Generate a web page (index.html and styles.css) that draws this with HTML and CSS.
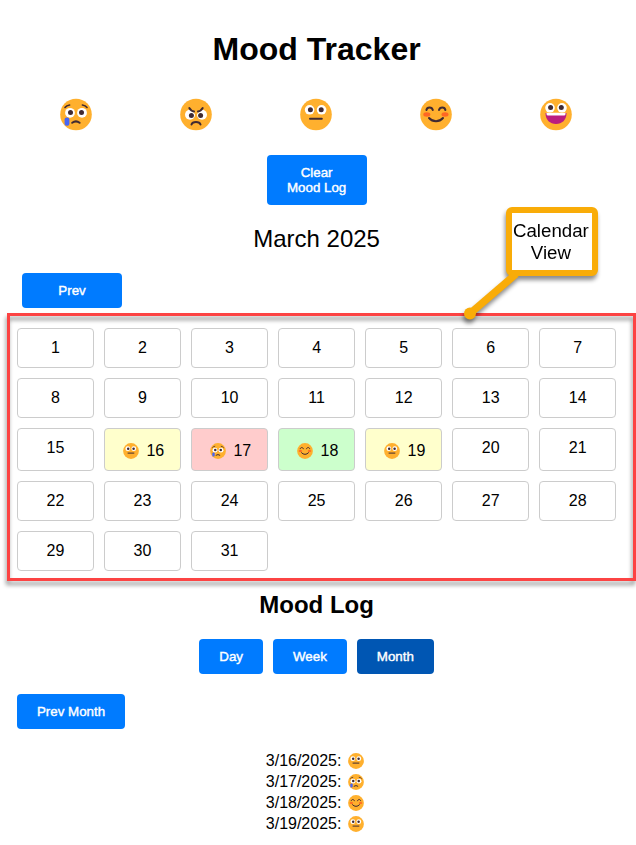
FILE: index.html
```html
<!DOCTYPE html>
<html lang="en">
<head>
<meta charset="utf-8">
<title>Mood Tracker</title>
<link rel="stylesheet" href="styles.css">
</head>
<body>
<svg class="sprite" aria-hidden="true">
  <defs>
    <g id="base"><circle cx="16" cy="16" r="15.8" fill="#ffb02e"/></g>
    <g id="eyes">
      <circle cx="9.6" cy="11.3" r="4.8" fill="#fff"/><circle cx="21.6" cy="11.3" r="4.8" fill="#fff"/>
      <circle cx="10.4" cy="11.3" r="2.5" fill="#402a32"/><circle cx="21.2" cy="11.3" r="2.5" fill="#402a32"/>
    </g>
    <symbol id="neutral" viewBox="0 0 32 32"><use href="#base"/><use href="#eyes"/><path class="ink" d="M10 20.2H21.8"/></symbol>
    <symbol id="sad" viewBox="0 0 32 32"><use href="#base"/>
      <circle cx="10" cy="14.3" r="4.9" fill="#fff"/><circle cx="22" cy="14.3" r="4.9" fill="#fff"/>
      <circle cx="10.5" cy="14" r="2.5" fill="#402a32"/><circle cx="21.5" cy="14" r="2.5" fill="#402a32"/>
      <path class="ink thin" d="M5 9Q6.5 6.8 9.6 6.5M22.4 6.5Q25.5 6.8 27 9"/>
      <path class="ink" d="M12.2 24.3Q16 21.5 19.6 24.3"/>
      <rect x="4.6" y="19" width="4.8" height="8.2" rx="2" fill="#4765f5"/></symbol>
    <symbol id="angry" viewBox="0 0 32 32"><use href="#base"/>
      <circle cx="10" cy="16.3" r="5" fill="#fff"/><circle cx="22" cy="16.3" r="5" fill="#fff"/>
      <path d="M8 8L15 12.8V15.4M24 8L17 12.8V15.4" fill="#ffb02e"/>
      <circle cx="11.4" cy="17" r="2.5" fill="#402a32"/><circle cx="20.6" cy="17" r="2.5" fill="#402a32"/>
      <path class="ink" d="M9.3 9.6Q11 12.7 14 13M22.7 9.6Q21 12.7 18 13"/>
      <path class="ink" d="M11.5 26Q12.3 23.6 16 23.6T20.5 26"/></symbol>
    <symbol id="happy" viewBox="0 0 32 32"><use href="#base"/>
      <ellipse cx="6.8" cy="16" rx="3.5" ry="2.2" fill="#ff6723"/><ellipse cx="25" cy="16" rx="3.5" ry="2.2" fill="#ff6723"/>
      <path class="ink" d="M6.4 11.5C7 8 12 8 12.8 11.5M19 11.5C19.8 8 24.8 8 25.4 11.5"/>
      <path class="ink" d="M9 19.5Q11.7 22.7 16 22.7T23 19.5"/></symbol>
    <symbol id="grin" viewBox="0 0 32 32"><use href="#base"/>
      <circle cx="10" cy="9.3" r="4.8" fill="#fff"/><circle cx="22" cy="9.3" r="4.8" fill="#fff"/>
      <circle cx="10.6" cy="9" r="2.5" fill="#402a32"/><circle cx="21.3" cy="9" r="2.5" fill="#402a32"/>
      <path d="M5.5 14.5H26.5C26.5 21.5 22 25.5 16 25.5S5.5 21.5 5.5 14.5Z" fill="#bb1d80"/>
      <path d="M6.5 14.2H25.5V15.5Q25.5 17 24 17H8Q6.5 17 6.5 15.5Z" fill="#fff"/></symbol>
  </defs>
</svg>
<main class="app">
  <h1>Mood Tracker</h1>
  <div class="moods">
    <svg><use href="#sad"/></svg>
    <svg><use href="#angry"/></svg>
    <svg><use href="#neutral"/></svg>
    <svg><use href="#happy"/></svg>
    <svg><use href="#grin"/></svg>
  </div>
  <button class="btn clear">Clear<br>Mood Log</button>
  <div class="month">March 2025</div>
  <button class="btn prev">Prev</button>
  <section class="calendar">
    <div class="day">1</div><div class="day">2</div><div class="day">3</div><div class="day">4</div><div class="day">5</div><div class="day">6</div><div class="day">7</div>
    <div class="day">8</div><div class="day">9</div><div class="day">10</div><div class="day">11</div><div class="day">12</div><div class="day">13</div><div class="day">14</div>
    <div class="day">15</div>
    <div class="day mood yellow"><svg class="face"><use href="#neutral"/></svg>16</div>
    <div class="day mood red"><svg class="face"><use href="#sad"/></svg>17</div>
    <div class="day mood green"><svg class="face"><use href="#happy"/></svg>18</div>
    <div class="day mood yellow"><svg class="face"><use href="#neutral"/></svg>19</div>
    <div class="day">20</div><div class="day">21</div>
    <div class="day">22</div><div class="day">23</div><div class="day">24</div><div class="day">25</div><div class="day">26</div><div class="day">27</div><div class="day">28</div>
    <div class="day">29</div><div class="day">30</div><div class="day">31</div>
    <div class="frame"></div>
    <div class="callout">
      <svg class="tail" viewBox="0 0 60 50"><path d="M55 4L9 43.5" stroke="#f9ac08" stroke-width="7.5"/><circle cx="9" cy="43.5" r="6" fill="#f9ac08"/></svg>
      <div class="label">Calendar<br>View</div>
    </div>
  </section>
  <h2>Mood Log</h2>
  <div class="tabs">
    <button class="btn">Day</button>
    <button class="btn">Week</button>
    <button class="btn active">Month</button>
  </div>
  <button class="btn prev-month">Prev Month</button>
  <div class="log">
    <div class="entry">3/16/2025:<svg class="face"><use href="#neutral"/></svg></div>
    <div class="entry">3/17/2025:<svg class="face"><use href="#sad"/></svg></div>
    <div class="entry">3/18/2025:<svg class="face"><use href="#happy"/></svg></div>
    <div class="entry">3/19/2025:<svg class="face"><use href="#neutral"/></svg></div>
  </div>
</main>
</body>
</html>
```
FILE: styles.css
```css
* { box-sizing: border-box; }
body {
  margin: 0;
  background: #fff;
  color: #000;
  font: 16px/18px "Liberation Sans", Arial, sans-serif;
  overflow: hidden;
}
.sprite { position: absolute; width: 0; height: 0; }
.ink { fill: none; stroke: #402a32; stroke-width: 2; stroke-linecap: round; }
.thin { stroke-width: 1.6; }
.app {
  display: flex;
  flex-direction: column;
  align-items: center;
  width: 599.2px;
  margin-left: 17px;
  padding-top: 31px;
}
h1 { margin: 0; font-size: 32px; line-height: 36px; }
.moods {
  display: flex;
  justify-content: space-around;
  width: 600px;
  margin: 31px 1px 0 0;
}
.moods svg { width: 32px; height: 33px; }
.btn {
  border: 0;
  border-radius: 4px;
  padding: 10px 20px;
  background: #007bff;
  color: #fff;
  font: 13.333px/15px "Liberation Sans", Arial, sans-serif;
  -webkit-text-stroke: 0.4px #fff;
}
.clear { width: 100px; margin-top: 24px; padding: 10px; }
.month { margin-top: 20px; font-size: 24px; line-height: 28px; }
.prev { align-self: flex-start; width: 100px; margin: 20px 0 0 5px; }
.calendar {
  position: relative;
  display: grid;
  grid-template-columns: repeat(7, 1fr);
  gap: 10px;
  width: 599.4px;
  margin-top: 20px;
}
.day {
  border: 1px solid #ccc;
  border-radius: 4px;
  padding: 10px 0;
  text-align: center;
}
.mood {
  display: flex;
  justify-content: center;
  align-items: center;
  padding: 11px 0 9px;
  line-height: 21px;
}
.mood .face { margin: 0 7.6px 0 2px; }
.yellow { background: #ffc; }
.red { background: #fcc; }
.green { background: #cfc; }
.face { width: 16px; height: 16px; }
.frame {
  position: absolute;
  inset: -15px -19.6px -10px -10px;
  border: 3px solid #fc4343;
  filter: drop-shadow(-1px 4px 2px rgba(0, 0, 0, 0.42));
}
.callout {
  position: absolute;
  top: -121px;
  left: 489px;
  filter: drop-shadow(-1px 4px 2px rgba(0, 0, 0, 0.45));
}
.label {
  width: 92px;
  height: 69px;
  border: 6px solid #f9ac08;
  border-radius: 6px;
  padding: 7px 2px 0 0;
  background: #fff;
  font-size: 18.7px;
  line-height: 22px;
  text-align: center;
  white-space: nowrap;
}
.tail {
  position: absolute;
  top: 63px;
  left: -45px;
  width: 60px;
  height: 50px;
}
h2 { margin: 20px 0 0; font-size: 24px; line-height: 28px; }
.tabs { display: flex; gap: 10px; margin-top: 20px; }
.active { background: #0056b3; }
.prev-month { align-self: flex-start; width: 108px; margin-top: 20px; padding: 10px 0; }
.log { margin-top: 21px; }
.entry { display: flex; align-items: center; height: 21px; }
.entry .face { margin: 0 3px 0 7px; }
```
